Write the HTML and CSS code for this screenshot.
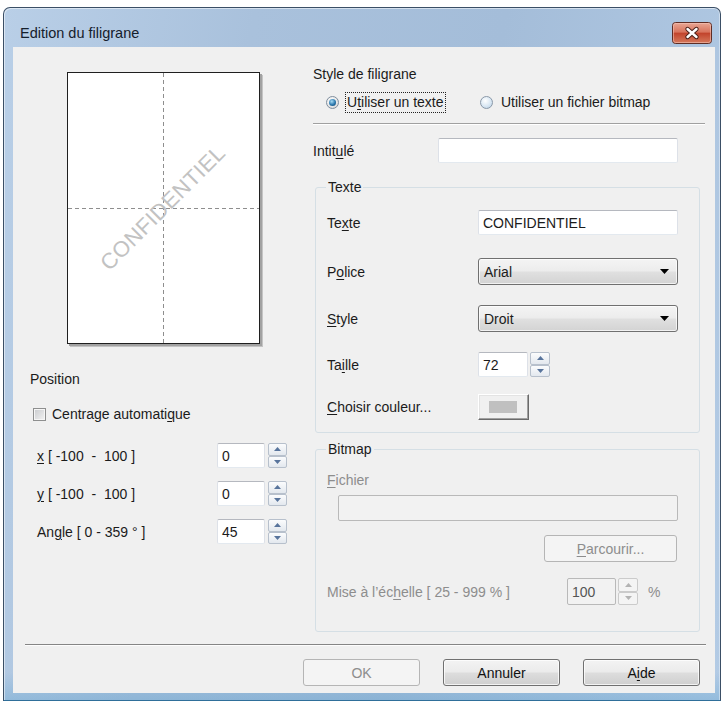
FILE: index.html
```html
<!DOCTYPE html>
<html lang="fr">
<head>
<meta charset="utf-8">
<title>Edition du filigrane</title>
<link rel="stylesheet" href="styles.css">
</head>
<body>
<div class="window">
  <div class="titlebar">
    <span class="title">Edition du filigrane</span>
    <span class="close" role="button" aria-label="Fermer">
      <svg width="40" height="22" viewBox="0 0 40 22">
        <defs>
          <linearGradient id="closeBg" x1="0" y1="0" x2="0" y2="1">
            <stop offset="0" stop-color="#e9a896"/>
            <stop offset="0.45" stop-color="#d8745d"/>
            <stop offset="0.52" stop-color="#c2452d"/>
            <stop offset="1" stop-color="#d67b5e"/>
          </linearGradient>
        </defs>
        <rect x="0.5" y="0.5" width="39" height="21" rx="3" fill="url(#closeBg)" stroke="#5e2d25"/>
        <rect x="1.5" y="1.5" width="37" height="19" rx="2" fill="none" stroke="#f5c9bb" stroke-opacity="0.55"/>
        <path d="M15.5 7 L24.5 15 M24.5 7 L15.5 15" stroke="#4a2018" stroke-width="4.4" stroke-linecap="round"/>
        <path d="M15.5 7 L24.5 15 M24.5 7 L15.5 15" stroke="#ffffff" stroke-width="2.4" stroke-linecap="round"/>
      </svg>
    </span>
  </div>

  <div class="client">
    <div class="main">
      <div class="left">
        <div class="page">
          <span class="mark">CONFIDENTIEL</span>
        </div>

        <div class="pos-title">Position</div>
        <div class="check-row">
          <span class="checkbox"></span>
          <span>Centrage automati<u>q</u>ue</span>
        </div>

        <div class="num-row">
          <span class="num-label"><u>x</u> [ -100 &nbsp;-&nbsp; 100 ]</span>
          <span class="field num">0</span>
          <span class="spinner">
            <span class="spin-btn"><svg width="7" height="4" viewBox="0 0 7 4"><path d="M0 4L3.5 0L7 4Z"/></svg></span>
            <span class="spin-btn"><svg width="7" height="4" viewBox="0 0 7 4"><path d="M0 0L7 0L3.5 4Z"/></svg></span>
          </span>
        </div>
        <div class="num-row">
          <span class="num-label"><u>y</u> [ -100 &nbsp;-&nbsp; 100 ]</span>
          <span class="field num">0</span>
          <span class="spinner">
            <span class="spin-btn"><svg width="7" height="4" viewBox="0 0 7 4"><path d="M0 4L3.5 0L7 4Z"/></svg></span>
            <span class="spin-btn"><svg width="7" height="4" viewBox="0 0 7 4"><path d="M0 0L7 0L3.5 4Z"/></svg></span>
          </span>
        </div>
        <div class="num-row">
          <span class="num-label">An<u>g</u>le [ 0 - 359 ° ]</span>
          <span class="field num">45</span>
          <span class="spinner">
            <span class="spin-btn"><svg width="7" height="4" viewBox="0 0 7 4"><path d="M0 4L3.5 0L7 4Z"/></svg></span>
            <span class="spin-btn"><svg width="7" height="4" viewBox="0 0 7 4"><path d="M0 0L7 0L3.5 4Z"/></svg></span>
          </span>
        </div>
      </div>

      <div class="right">
        <div class="style-title">Style de filigrane</div>
        <div class="radios">
          <div class="opt">
            <span class="radio on"><span class="dot"></span></span>
            <span class="opt-label focus">U<u>t</u>iliser un texte</span>
          </div>
          <div class="opt">
            <span class="radio"></span>
            <span class="opt-label">Utilise<u>r</u> un fichier bitmap</span>
          </div>
        </div>
        <div class="hsep"></div>

        <div class="caption-row">
          <span class="caption-label">Intit<u>u</u>lé</span>
          <span class="field caption-field"></span>
        </div>

        <fieldset class="group text-group">
          <legend>Texte</legend>
          <div class="grow r1">
            <span class="glabel">Te<u>x</u>te</span>
            <span class="field wide">CONFIDENTIEL</span>
          </div>
          <div class="grow r2">
            <span class="glabel">P<u>o</u>lice</span>
            <span class="combo"><span>Arial</span><svg width="9" height="5" viewBox="0 0 9 5"><path d="M0 0H9L4.5 5Z"/></svg></span>
          </div>
          <div class="grow r3">
            <span class="glabel"><u>S</u>tyle</span>
            <span class="combo"><span>Droit</span><svg width="9" height="5" viewBox="0 0 9 5"><path d="M0 0H9L4.5 5Z"/></svg></span>
          </div>
          <div class="grow r4">
            <span class="glabel">Ta<u>i</u>lle</span>
            <span class="field size">72</span>
            <span class="spinner">
              <span class="spin-btn"><svg width="7" height="4" viewBox="0 0 7 4"><path d="M0 4L3.5 0L7 4Z"/></svg></span>
              <span class="spin-btn"><svg width="7" height="4" viewBox="0 0 7 4"><path d="M0 0L7 0L3.5 4Z"/></svg></span>
            </span>
          </div>
          <div class="grow r5">
            <span class="glabel"><u>C</u>hoisir couleur...</span>
            <span class="color-btn"><span class="swatch"></span></span>
          </div>
        </fieldset>

        <fieldset class="group bitmap-group">
          <legend>Bitmap</legend>
          <div class="dis-label"><u>F</u>ichier</div>
          <div class="field disabled file-field"></div>
          <div class="browse-row"><span class="btn disabled browse"><u>P</u>arcourir...</span></div>
          <div class="scale-row">
            <span class="scale-label">Mise à l’éc<u>h</u>elle [ 25 - 999 % ]</span>
            <span class="field disabled scale-field">100</span>
            <span class="spinner disabled">
              <span class="spin-btn"><svg width="7" height="4" viewBox="0 0 7 4"><path d="M0 4L3.5 0L7 4Z"/></svg></span>
              <span class="spin-btn"><svg width="7" height="4" viewBox="0 0 7 4"><path d="M0 0L7 0L3.5 4Z"/></svg></span>
            </span>
            <span class="pct">%</span>
          </div>
        </fieldset>
      </div>
    </div>

    <div class="footer-sep"></div>
    <div class="buttons">
      <span class="btn disabled">OK</span>
      <span class="btn">Annuler</span>
      <span class="btn">A<u>i</u>de</span>
    </div>
  </div>
</div>
</body>
</html>
```

FILE: styles.css
```css
* {
  box-sizing: border-box;
}

html,
body {
  margin: 0;
  padding: 0;
  background: #ffffff;
}

body {
  width: 723px;
  height: 704px;
  overflow: hidden;
  font-family: "Liberation Sans", Arial, sans-serif;
  font-size: 14px;
  line-height: 18px;
  color: #1b1b1b;
}

u {
  text-decoration-thickness: 1px;
  text-underline-offset: 2px;
}

/* ---------- window frame ---------- */
.window {
  margin: 7px 0 0 3px;
  width: 718px;
  height: 694px;
  border: 1px solid #3b4f66;
  border-bottom-color: #2f6f9a;
  border-radius: 7px 7px 0 0;
  padding: 0 5px 7px 9px;
  display: flex;
  flex-direction: column;
  background:
    linear-gradient(to bottom, rgba(255, 255, 255, 0) 0, rgba(255, 255, 255, 0) 96%, rgba(90, 160, 205, 0.35) 100%),
    linear-gradient(100deg, #b9cfe7 0%, #a9c1dc 30%, #a4bdd9 60%, #b3cbe5 100%);
  box-shadow: inset 1px 1px 0 rgba(255, 255, 255, 0.5), inset -1px 0 0 rgba(255, 255, 255, 0.4);
}

.titlebar {
  height: 39px;
  padding: 10px 3px 0 7px;
  display: flex;
  align-items: center;
  justify-content: space-between;
}

.title {
  font-size: 14.5px;
  color: #15202c;
}

.close {
  display: block;
  width: 40px;
  height: 22px;
}

.close svg {
  display: block;
}

.client {
  flex: 1;
  background: #f0f0f0;
  display: flex;
  flex-direction: column;
}

.main {
  height: 597px;
  display: flex;
}

/* ---------- left column: preview + position ---------- */
.left {
  width: 287px;
  padding-top: 25px;
}

.page {
  margin-left: 54px;
  width: 193px;
  height: 272px;
  border: 1px solid #1f1f1f;
  box-shadow: 2px 2px 0 #a2a2a2, 3px 3px 0 #c4c4c4;
  background:
    repeating-linear-gradient(to bottom, #8e8e8e 0 4px, transparent 4px 7px) center / 1px 100% no-repeat,
    repeating-linear-gradient(to right, #8e8e8e 0 4px, transparent 4px 7px) center / 100% 1px no-repeat,
    #ffffff;
  display: flex;
  align-items: center;
  justify-content: center;
  overflow: hidden;
}

.mark {
  transform: rotate(-45deg);
  font-size: 22px;
  letter-spacing: 0.4px;
  color: #c2c2c2;
  white-space: nowrap;
}

.pos-title {
  margin-top: 26px;
  padding-left: 17px;
  height: 18px;
}

.check-row {
  margin-top: 17px;
  height: 18px;
  padding-left: 20px;
  display: flex;
  align-items: center;
  gap: 6px;
}

.checkbox {
  flex-shrink: 0;
  width: 13px;
  height: 13px;
  border: 1px solid #8e8f8f;
  background: linear-gradient(135deg, #c9cbce, #f3f3f3);
  box-shadow: inset 0 0 0 1px #f6f6f6;
}

.num-row {
  margin-top: 13px;
  height: 25px;
  padding-left: 24px;
  display: flex;
  align-items: center;
}

.check-row + .num-row {
  margin-top: 20px;
}

.num-label {
  width: 180px;
}

/* ---------- shared controls ---------- */
.field {
  flex-shrink: 0;
  height: 25px;
  background: #ffffff;
  border: 1px solid;
  border-color: #b5b8bf #dde1e8 #e3e9ef #dde1e8;
  border-radius: 2px;
  padding: 0 4px;
  display: flex;
  align-items: center;
  white-space: nowrap;
}

.field.num {
  width: 48px;
  margin-right: 3px;
}

.field.disabled {
  background: #f2f2f2;
  border-color: #b9b9b9;
  color: #555555;
}

.spinner {
  flex-shrink: 0;
  width: 19px;
  height: 25px;
  display: flex;
  flex-direction: column;
}

.spin-btn {
  flex: 1;
  border: 1px solid #b7c0cc;
  border-radius: 2px;
  background: linear-gradient(#fbfcfd, #e3e8ee);
  display: flex;
  align-items: center;
  justify-content: center;
}

.spin-btn svg {
  display: block;
  fill: #58749c;
}

.spinner.disabled .spin-btn {
  border-color: #cbcbcb;
  background: #f4f4f4;
}

.spinner.disabled .spin-btn svg {
  fill: #b3b3b3;
}

.combo {
  width: 200px;
  height: 27px;
  border: 1px solid #707070;
  border-radius: 3px;
  background: linear-gradient(#f4f4f4 0%, #ececec 48%, #e0e0e0 52%, #d3d3d3 100%);
  box-shadow: inset 0 0 0 1px rgba(255, 255, 255, 0.7);
  padding: 0 8px 0 5px;
  display: flex;
  align-items: center;
  justify-content: space-between;
}

.combo svg {
  display: block;
  fill: #000000;
}

.btn {
  height: 27px;
  border: 1px solid #707070;
  border-radius: 3px;
  background: linear-gradient(#f3f3f3 0%, #ebebeb 48%, #dddddd 52%, #cfcfcf 100%);
  box-shadow: inset 0 0 0 1px rgba(255, 255, 255, 0.75);
  display: flex;
  align-items: center;
  justify-content: center;
  color: #111111;
}

.btn.disabled {
  border-color: #b5b5b5;
  background: #f4f4f4;
  box-shadow: none;
  color: #8d8d8d;
}

/* ---------- right column ---------- */
.right {
  margin-left: 13px;
  width: 392px;
}

.style-title {
  margin-top: 18px;
  height: 18px;
}

.radios {
  margin-top: 9px;
  height: 21px;
  display: flex;
  padding-left: 13px;
}

.opt {
  flex-shrink: 0;
  width: 154px;
  height: 21px;
  display: flex;
  align-items: center;
}

.radio {
  flex-shrink: 0;
  width: 13px;
  height: 13px;
  border-radius: 50%;
  border: 1px solid #8a98a8;
  background: radial-gradient(circle at 40% 35%, #ffffff 0%, #d9e7f3 55%, #b3cde4 100%);
  display: flex;
  align-items: center;
  justify-content: center;
}

.radio.on {
  border-color: #7f8e9e;
  background: radial-gradient(circle at 40% 35%, #ffffff 0%, #e6e6e6 60%, #c9c9c9 100%);
}

.dot {
  width: 7px;
  height: 7px;
  border-radius: 50%;
  background: radial-gradient(circle at 40% 35%, #a7dcf5 0%, #2a77ad 55%, #0f3f66 100%);
}

.opt-label {
  margin-left: 6px;
  height: 21px;
  padding: 0 1px;
  border: 1px dotted transparent;
  line-height: 19px;
  white-space: nowrap;
}

.opt-label.focus {
  border-color: #222222;
}

.hsep {
  margin-top: 10px;
  height: 2px;
  border-top: 1px solid #a0a0a0;
  border-bottom: 1px solid #ffffff;
}

.caption-row {
  margin-top: 13px;
  height: 25px;
  display: flex;
  align-items: center;
}

.caption-label {
  width: 125px;
}

.caption-field {
  width: 240px;
}

/* group boxes */
.group {
  margin: 0 0 0 2px;
  width: 385px;
  border: 1px solid #d5dfe5;
  border-radius: 3px;
  padding: 14px 0 12px 11px;
  min-width: 0;
}

.group legend {
  padding: 0 2px;
  margin-left: -1px;
  line-height: 18px;
  color: #1b1b1b;
}

.text-group {
  margin-top: 15px;
}

.grow {
  display: flex;
  align-items: center;
}

.glabel {
  width: 151px;
}

.field.wide {
  width: 200px;
}

.r1 { height: 25px; }
.r2 { height: 27px; margin-top: 23px; }
.r3 { height: 27px; margin-top: 20px; }
.r4 { height: 25px; margin-top: 20px; }
.r5 { height: 26px; margin-top: 17px; }

.field.size {
  width: 50px;
  margin-right: 2px;
}

.r4 .spinner {
  width: 20px;
}

.color-btn {
  width: 51px;
  height: 26px;
  background: #f0f0f0;
  border: 1px solid;
  border-color: #ffffff #6a6a6a #6a6a6a #ffffff;
  box-shadow: inset -1px -1px 0 #a0a0a0, inset 1px 1px 0 #e3e3e3;
  display: flex;
  align-items: center;
  justify-content: center;
}

.swatch {
  width: 28px;
  height: 12px;
  background: #c0c0c0;
  margin-left: -1px;
}

.bitmap-group {
  margin-top: 7px;
  padding-top: 13px;
  padding-bottom: 26px;
}

.dis-label {
  height: 18px;
  color: #8d8d8d;
}

.file-field {
  margin: 6px 0 0 11px;
  width: 340px;
  height: 26px;
}

.browse-row {
  margin-top: 14px;
  padding-left: 217px;
}

.browse {
  width: 133px;
  height: 27px;
}

.scale-row {
  margin-top: 16px;
  height: 27px;
  display: flex;
  align-items: center;
}

.scale-label {
  width: 240px;
  color: #8d8d8d;
}

.scale-field {
  width: 49px;
  height: 27px;
  margin-right: 2px;
}

.scale-row .spinner {
  width: 20px;
  height: 27px;
}

.pct {
  margin-left: 10px;
  color: #8d8d8d;
}

/* ---------- footer ---------- */
.footer-sep {
  margin: 0 9px 0 12px;
  height: 2px;
  border-top: 1px solid #858585;
  border-bottom: 1px solid #fdfdfd;
}

.buttons {
  margin-top: 13px;
  padding-right: 15px;
  display: flex;
  justify-content: flex-end;
  gap: 23px;
}

.buttons .btn {
  width: 117px;
}
```
